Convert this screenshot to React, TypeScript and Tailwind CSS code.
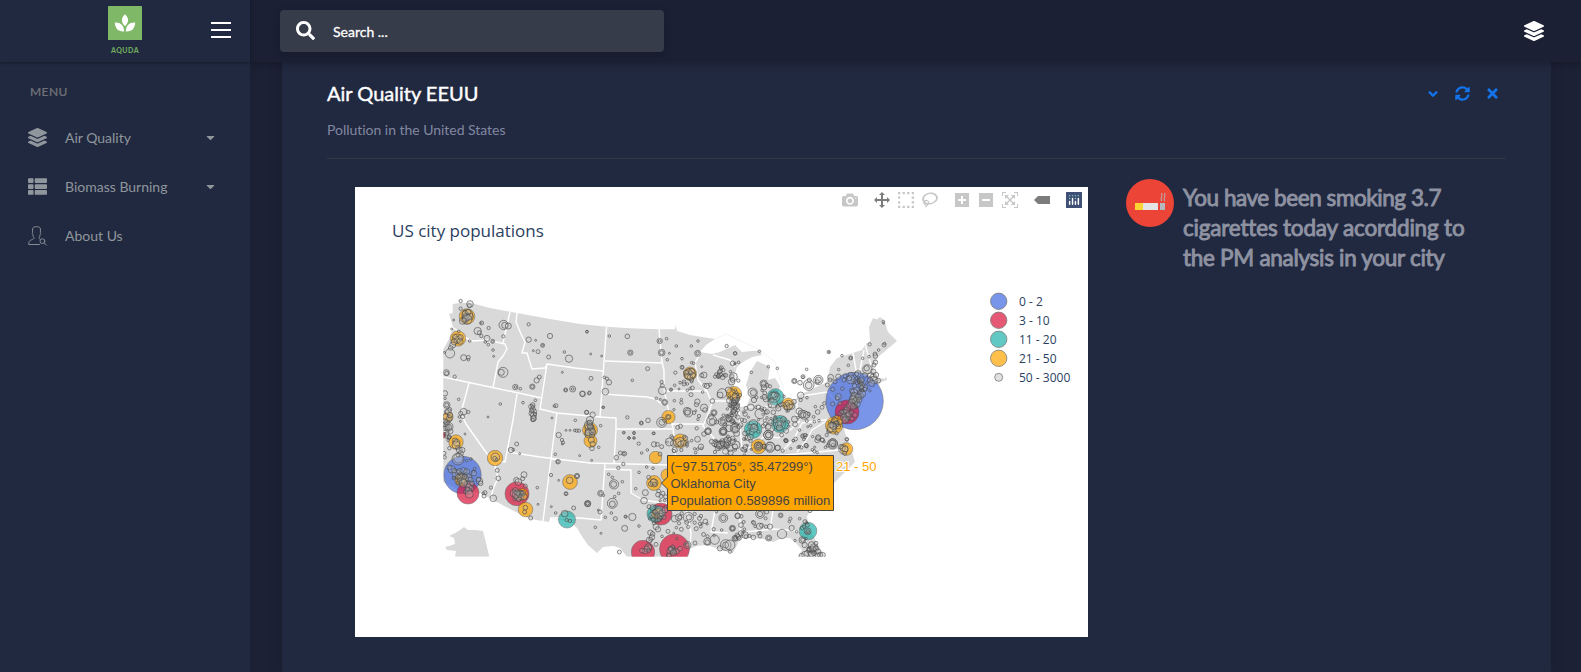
import React from "react";
import { FaChevronDown, FaLayerGroup, FaSearch, FaSyncAlt, FaThList, FaTimes, FaCaretDown } from "react-icons/fa";

type Dot = [number, number, number];

// City markers are stored per map tile, at three units to the pixel.
const tiles: { x: number; y: number; dots: Dot[] }[] = [
  {
    x: 430,
    y: 290,
    dots: [
      [92, 33, 5], [92, 56, 5], [120, 42, 10], [118, 47, 6], [71, 90, 3], [112, 75, 16], [108, 82, 12], [98, 93, 10], [120, 80, 10], [105, 70, 8], [115, 66, 8], [112, 88, 14], [102, 90, 7],
      [155, 99, 6], [153, 99, 3], [143, 123, 11], [148, 128, 6], [154, 138, 5], [176, 114, 5], [221, 105, 14], [224, 106, 9], [235, 108, 9], [220, 139, 5], [171, 145, 9], [166, 156, 4], [175, 164, 4], [188, 154, 6], [188, 154, 3],
      [86, 124, 4], [65, 117, 3], [82, 146, 14], [82, 148, 9], [72, 156, 9], [90, 154, 9], [68, 165, 9], [75, 140, 7], [92, 142, 8], [62, 174, 7], [60, 190, 14], [119, 153, 4], [101, 203, 9], [115, 202, 6], [115, 209, 4], [189, 180, 4], [191, 199, 3],
      [43, 187, 3], [49, 248, 9], [50, 250, 6], [74, 260, 5], [219, 247, 15], [214, 247, 9], [256, 291, 8], [257, 291, 4], [271, 296, 4], [307, 290, 8], [307, 290, 5], [320, 271, 8], [328, 261, 6],
      [296, 103, 5], [296, 149, 8], [317, 151, 3], [338, 166, 6], [338, 166, 3], [360, 138, 8], [310, 182, 3], [324, 185, 6], [356, 201, 6], [403, 186, 4], [417, 206, 11], [471, 125, 4], [397, 247, 3], [407, 300, 6], [407, 300, 4], [428, 297, 9], [428, 297, 4], [458, 312, 8], [477, 310, 5], [378, 347, 6], [373, 348, 4], [436, 391, 4], [366, 384, 3], [470, 367, 6],
      [86, 328, 4], [211, 342, 4], [174, 381, 3], [279, 338, 4], [316, 331, 4], [101, 365, 10], [115, 366, 5], [92, 370, 6], [88, 381, 4], [98, 380, 6], [45, 310, 8], [45, 325, 4], [50, 345, 10], [50, 345, 6], [55, 365, 9], [47, 380, 9], [58, 385, 9], [55, 410, 14], [45, 402, 8], [60, 375, 8],
      [308, 345, 7], [303, 350, 7], [308, 358, 8], [312, 365, 8], [305, 370, 8], [310, 376, 9], [311, 384, 8], [309, 350, 5], [305, 362, 6], [315, 372, 5],
    ],
  },
  {
    x: 430,
    y: 420,
    dots: [
      [91, 4, 3], [105, 42, 3], [50, 8, 8], [45, 25, 7], [55, 22, 10], [62, 34, 7], [50, 42, 6], [45, 3, 7], [75, 62, 8], [80, 68, 10], [78, 75, 12], [83, 83, 6], [88, 90, 9], [97, 90, 8], [92, 100, 8], [42, 100, 6], [44, 112, 5],
      [85, 115, 14], [84, 117, 18], [84, 105, 6], [123, 117, 4], [110, 122, 4], [196, 112, 13], [194, 115, 6], [200, 118, 4], [202, 151, 6], [205, 175, 7], [183, 203, 5], [190, 235, 10], [165, 218, 6], [162, 228, 6], [160, 220, 4],
      [148, 183, 10], [152, 190, 7], [145, 178, 7], [134, 146, 4], [65, 148, 11], [58, 142, 7], [78, 160, 12], [92, 165, 9], [100, 152, 9], [110, 155, 9], [95, 176, 13], [105, 182, 12], [115, 172, 11], [122, 180, 8], [112, 194, 10], [104, 170, 7], [120, 194, 11], [88, 154, 8], [132, 160, 8], [100, 190, 12], [116, 202, 10], [124, 205, 8], [115, 213, 10], [108, 215, 7], [118, 222, 12], [112, 208, 7], [126, 190, 7], [84, 170, 7], [72, 152, 7],
      [243, 90, 8], [250, 89, 4], [260, 72, 6], [269, 101, 3], [282, 164, 9], [278, 176, 6], [259, 180, 8], [265, 186, 10], [286, 198, 6], [256, 212, 9], [250, 220, 10], [258, 225, 11], [264, 230, 12], [270, 222, 10], [273, 232, 8], [262, 218, 8], [279, 220, 8], [266, 238, 7], [282, 230, 9], [286, 263, 7], [284, 276, 6], [302, 294, 6],
      [322, 203, 4], [324, 253, 3], [384, 125, 7], [383, 125, 4], [386, 45, 8], [396, 60, 5], [399, 68, 5], [397, 72, 3], [408, 31, 3], [420, 31, 3], [434, 31, 4], [440, 32, 5], [447, 32, 5], [449, 107, 3], [376, 103, 4], [363, 165, 5], [386, 181, 3], [419, 181, 10], [441, 168, 8], [441, 168, 5], [408, 221, 6], [408, 221, 4], [431, 264, 6], [364, 260, 3], [377, 279, 4], [404, 281, 10], [410, 300, 5], [420, 303, 5], [473, 251, 9], [472, 250, 6], [310, -3, 8], [308, 0, 5],
    ],
  },
  {
    x: 580,
    y: 300,
    dots: [
      [21, 95, 4], [32, 162, 3], [88, 108, 4], [142, 109, 7], [151, 158, 8], [151, 158, 4], [65, 168, 3], [239, 123, 8], [239, 123, 4], [260, 116, 4], [289, 138, 4], [334, 138, 4], [354, 123, 4], [245, 158, 10], [245, 158, 6], [268, 160, 3], [353, 160, 9], [353, 160, 5], [262, 179, 4], [306, 176, 4], [203, 206, 6], [157, 241, 4], [33, 235, 6], [73, 232, 4], [81, 236, 5], [87, 247, 8], [76, 275, 10], [7, 281, 8], [29, 278, 5], [70, 322, 4], [69, 322, 3], [38, 344, 8], [20, 337, 6],
      [286, 218, 5], [306, 202, 6], [307, 202, 4], [335, 188, 4], [341, 190, 4], [365, 200, 3], [372, 225, 9], [365, 226, 6], [330, 222, 17], [326, 216, 9], [335, 214, 9], [323, 228, 9], [330, 232, 8], [338, 226, 8], [332, 218, 6], [318, 218, 7], [335, 240, 6], [300, 248, 4], [312, 246, 6], [312, 252, 6], [322, 252, 4], [337, 264, 6], [284, 256, 4], [273, 269, 5], [273, 269, 3], [297, 267, 3], [331, 266, 4], [374, 256, 6], [381, 258, 8], [390, 254, 5], [245, 246, 5], [247, 257, 6], [247, 272, 12], [229, 295, 4], [254, 307, 9], [254, 307, 6], [241, 298, 3], [283, 302, 4], [333, 284, 6], [368, 276, 4],
      [142, 352, 5], [184, 369, 6], [184, 369, 4], [204, 361, 7], [265, 351, 8], [265, 351, 5], [245, 367, 15], [246, 367, 9], [253, 362, 5], [304, 308, 5], [321, 333, 11], [325, 338, 13], [323, 338, 8], [347, 332, 3], [352, 305, 8], [372, 323, 11], [375, 330, 7], [357, 348, 5], [354, 358, 4], [293, 382, 6], [397, 303, 7], [402, 338, 9], [402, 338, 6], [393, 350, 8], [395, 362, 15], [397, 365, 9], [410, 366, 6], [428, 365, 13], [428, 365, 8], [446, 356, 9], [452, 356, 6], [384, 393, 10], [384, 393, 7], [350, 385, 5], [429, 395, 12], [429, 395, 8], [447, 385, 10], [463, 380, 8], [470, 400, 9],
      [426, 280, 14], [420, 285, 9], [445, 270, 9], [455, 245, 10], [460, 230, 12], [458, 240, 7], [415, 228, 6], [418, 216, 6], [430, 210, 5], [437, 226, 6], [405, 230, 5], [440, 138, 5], [466, 190, 3], [465, 160, 5], [475, 242, 5], [62, 377, 4], [30, 360, 11], [25, 375, 12], [29, 385, 14], [28, 395, 12], [35, 392, 10], [26, 402, 12], [31, 380, 8], [36, 405, 8], [30, 368, 8], [132, 398, 3], [162, 398, 4], [147, 414, 4], [162, 414, 3], [220, 400, 4], [277, 414, 5], [313, 410, 5],
    ],
  },
  {
    x: 580,
    y: 430,
    dots: [
      [25, 8, 10], [38, 6, 9], [34, 30, 9], [38, 42, 8], [36, 55, 7], [56, 52, 4], [35, 91, 3], [131, 8, 4], [162, 10, 4], [222, 10, 4], [147, 24, 4], [162, 24, 4], [176, 41, 5], [121, 69, 6], [133, 71, 7], [132, 71, 4], [109, 83, 7], [185, 69, 4], [240, 72, 6], [222, 43, 8], [232, 43, 6], [245, 50, 6], [268, 36, 12], [280, 40, 9], [292, 38, 12], [300, 35, 13], [302, 42, 9], [310, 38, 8], [284, 60, 8], [282, 63, 5], [304, 60, 5], [321, 48, 4], [335, 32, 4], [363, 50, 8], [347, 68, 4], [372, 12, 7], [384, 5, 9], [202, 60, 4], [200, 111, 4], [130, 102, 5], [115, 114, 5],
      [222, 159, 12], [220, 155, 9], [224, 162, 6], [212, 162, 7], [219, 115, 4], [206, 142, 6], [177, 127, 4], [86, 133, 4], [102, 163, 14], [101, 163, 9], [127, 155, 4], [97, 142, 4], [62, 190, 9], [62, 190, 5], [116, 190, 4], [97, 220, 15], [97, 222, 9], [104, 200, 4], [23, 221, 9], [23, 221, 5], [60, 246, 6], [55, 240, 3], [94, 249, 4], [76, 262, 4], [106, 266, 6], [137, 260, 5], [137, 260, 3], [157, 261, 11], [134, 295, 9], [167, 176, 4], [196, 188, 9], [192, 212, 10], [234, 194, 7], [243, 199, 6], [254, 211, 4], [207, 230, 6], [46, 292, 4], [63, 310, 3], [118, 366, 6], [70, 196, 4],
      [234, 248, 13], [240, 243, 15], [230, 257, 9], [241, 259, 9], [216, 256, 10], [247, 250, 10], [225, 246, 7], [255, 240, 9], [237, 270, 6], [220, 268, 6], [252, 262, 6], [284, 266, 10], [296, 262, 10], [300, 262, 6], [325, 262, 15], [327, 262, 8], [305, 250, 5], [344, 252, 5], [363, 258, 5], [376, 274, 7], [360, 281, 5], [222, 280, 5], [228, 290, 9], [234, 298, 8], [211, 308, 8], [218, 312, 7], [208, 330, 9], [212, 328, 6], [216, 322, 8], [228, 343, 6], [264, 304, 6], [246, 319, 4], [281, 309, 3], [289, 293, 4], [304, 298, 6], [177, 288, 4], [320, 277, 6], [297, 280, 5],
      [205, 352, 11], [208, 352, 7], [200, 356, 8], [195, 364, 8], [186, 362, 7], [206, 362, 6], [277, 358, 10], [281, 362, 8], [270, 362, 9], [290, 364, 8], [280, 368, 9], [279, 350, 5], [272, 356, 7], [322, 345, 11], [322, 345, 6], [300, 356, 7], [345, 339, 6], [382, 335, 11], [382, 337, 7], [404, 329, 14], [437, 345, 16], [437, 345, 9], [420, 355, 8], [430, 264, 13], [430, 264, 8], [473, 258, 8], [457, 295, 9], [457, 295, 5], [425, 300, 4], [465, 325, 9], [475, 320, 7], [450, 365, 5], [409, 245, 4], [344, 278, 5],
      [405, 40, 10], [412, 45, 9], [420, 45, 11], [428, 40, 7], [413, 55, 7], [440, 45, 8], [450, 55, 10], [430, 3, 11], [430, 5, 8], [452, 68, 8], [395, 35, 7], [405, 66, 5], [437, 64, 9],
    ],
  },
  {
    x: 730,
    y: 300,
    dots: [
      [16, 160, 5], [88, 154, 4], [14, 192, 3], [26, 187, 4], [64, 217, 4], [115, 200, 4], [142, 205, 4], [296, 156, 5], [297, 156, 3], [362, 174, 6], [362, 174, 4], [336, 167, 4], [355, 196, 4], [326, 209, 4], [398, 175, 4], [419, 133, 5], [462, 135, 6], [464, 131, 4], [460, 65, 4], [461, 70, 3], [446, 150, 4], [435, 162, 6], [436, 168, 7], [436, 187, 7], [432, 195, 6], [417, 170, 4],
      [230, 208, 4], [219, 230, 6], [219, 232, 4], [193, 243, 8], [193, 243, 5], [210, 248, 7], [236, 255, 16], [236, 256, 10], [238, 240, 6], [265, 240, 14], [265, 240, 9], [262, 245, 6], [101, 251, 11], [101, 251, 7], [111, 256, 6], [120, 259, 5], [68, 278, 14], [70, 278, 9], [72, 300, 8], [62, 322, 10], [85, 322, 7], [48, 325, 6], [90, 341, 15], [133, 290, 17], [132, 288, 12], [132, 285, 8], [125, 300, 7], [140, 285, 6], [128, 310, 14], [145, 325, 8], [175, 315, 14], [178, 320, 9], [172, 312, 6], [186, 320, 8], [168, 324, 6], [212, 286, 10], [212, 300, 5], [231, 293, 4], [192, 305, 7], [256, 320, 4], [276, 322, 6], [283, 310, 5], [263, 336, 7], [216, 342, 12], [222, 345, 13], [220, 345, 8], [230, 345, 10], [236, 342, 5], [253, 365, 4], [267, 362, 4], [242, 377, 4],
      [148, 372, 18], [148, 372, 12], [148, 372, 7], [160, 358, 8], [122, 368, 9], [120, 383, 14], [115, 380, 8], [136, 362, 6], [168, 392, 8], [115, 405, 14], [115, 405, 8], [70, 372, 13], [72, 378, 8], [60, 380, 7], [78, 383, 6], [61, 411, 9], [55, 396, 6], [85, 395, 5], [100, 378, 6], [15, 385, 14], [15, 388, 9], [28, 380, 6], [8, 362, 6], [44, 362, 6], [45, 400, 7], [85, 437, 12], [85, 437, 7], [102, 438, 6], [120, 440, 14], [143, 443, 8], [18, 435, 12], [15, 440, 8], [8, 425, 8],
      [308, 430, 14], [308, 430, 9], [310, 435, 6], [265, 412, 8], [277, 420, 6], [351, 418, 5], [340, 448, 14], [338, 445, 8], [225, 405, 5], [168, 422, 6], [208, 440, 3], [190, 422, 4], [228, 436, 6], [230, 440, 4], [320, 400, 5], [295, 395, 5], [300, 390, 8], [290, 405, 5],
      [412, 208, 14], [410, 205, 8], [430, 215, 8], [422, 228, 10], [430, 232, 10], [432, 240, 12], [420, 240, 8], [438, 225, 8], [425, 250, 9], [445, 242, 7], [405, 225, 7], [395, 240, 8], [380, 222, 6], [362, 225, 8], [362, 238, 13], [358, 235, 7], [345, 228, 6], [325, 230, 8], [302, 232, 9], [300, 240, 6], [315, 245, 6], [292, 255, 6], [308, 268, 6], [342, 240, 6], [337, 266, 5], [325, 290, 9], [322, 295, 6], [330, 310, 6], [308, 312, 6], [374, 258, 7], [380, 270, 9], [372, 278, 11], [374, 290, 12], [370, 298, 12], [365, 308, 11], [378, 302, 10], [385, 290, 9], [390, 278, 7], [395, 262, 6], [382, 312, 9], [358, 318, 9], [370, 320, 9], [398, 282, 9], [388, 300, 8], [405, 268, 6], [350, 330, 9], [345, 340, 12], [352, 350, 11], [340, 352, 9], [356, 342, 8], [365, 338, 6], [375, 345, 7], [335, 335, 6], [345, 360, 10], [366, 356, 6], [330, 365, 8], [318, 372, 9], [310, 378, 10], [305, 382, 14], [315, 360, 7], [325, 380, 7], [304, 375, 8], [320, 350, 5],
    ],
  },
  {
    x: 730,
    y: 430,
    dots: [
      [65, 6, 8], [72, -5, 12], [115, 15, 14], [115, 15, 9], [148, -6, 9], [85, 50, 13], [85, 50, 8], [84, 50, 4], [103, 50, 7], [120, 52, 15], [118, 52, 9], [143, 54, 8], [168, 32, 6], [168, 33, 4], [158, 62, 5], [190, 32, 4], [208, 50, 4], [229, 47, 6], [264, 24, 7], [277, 30, 6], [308, 42, 15], [308, 40, 10], [350, 28, 5], [345, 57, 9], [333, 50, 7], [344, 70, 6],
      [23, 257, 8], [90, 252, 13], [90, 252, 8], [110, 246, 6], [152, 256, 7], [152, 256, 4], [181, 266, 5], [178, 275, 4], [209, 266, 4], [225, 275, 6], [240, 242, 6], [222, 290, 5], [200, 305, 4], [185, 294, 8], [156, 312, 14], [120, 290, 8], [108, 290, 5], [116, 324, 9], [116, 324, 5], [90, 318, 6], [86, 310, 5], [70, 322, 7], [45, 315, 10], [48, 320, 6], [16, 325, 7], [16, 324, 4], [28, 325, 6], [8, 295, 7], [33, 310, 8], [58, 318, 5], [0, 345, 15],
      [232, 285, 6], [233, 304, 10], [233, 304, 5], [217, 330, 10], [218, 330, 6], [224, 345, 8], [245, 345, 10], [252, 352, 11], [248, 358, 10], [258, 356, 8], [258, 340, 6], [264, 365, 8], [232, 370, 9], [225, 374, 10], [215, 378, 8], [244, 372, 9], [270, 375, 8], [278, 375, 8], [252, 370, 7], [262, 376, 7], [237, 358, 6],
    ],
  },
];

// Dense metropolitan areas: centre, spread and number of small cities.
const clusters: [number, number, number, number, number][] = [
  [735, 402, 6, 13, 50], [722, 372, 10, 8, 14], [730, 420, 14, 10, 24], [722, 443, 9, 6, 26],
  [745, 445, 20, 9, 18], [770, 420, 20, 14, 22], [772, 396, 14, 10, 10], [800, 425, 18, 16, 16],
  [812, 444, 20, 8, 16], [861, 382, 10, 10, 26], [854, 400, 6, 10, 22], [846, 415, 6, 7, 16], [835, 425, 6, 5, 14],
  [690, 440, 22, 14, 10], [665, 497, 12, 14, 8], [656, 514, 6, 6, 14], [700, 530, 22, 14, 12],
  [750, 525, 26, 10, 14], [805, 532, 12, 12, 7], [811, 549, 7, 6, 12], [464, 478, 9, 8, 22],
  [519, 494, 5, 5, 10], [467, 316, 5, 5, 10], [589, 430, 4, 8, 8], [447, 430, 3, 20, 16], [672, 552, 6, 4, 6], [690, 400, 18, 20, 6],
];

function scatter(): Dot[] {
  let seed = 20147;
  const next = () => {
    seed = (seed * 16807) % 2147483647;
    return seed / 2147483647;
  };
  const dots: Dot[] = [];
  for (const [cx, cy, sx, sy, n] of clusters) {
    for (let i = 0; i < n; i++) {
      const x = cx + (next() + next() - 1) * sx * 1.25;
      const y = cy + (next() + next() - 1) * sy * 1.25;
      const r = 1.1 + next() * next() * 2.2;
      dots.push([x, y, r]);
    }
  }
  return dots;
}
const smallCities = scatter();

const large: { fill: string; dots: Dot[] }[] = [
  { fill: "#4169e1", dots: [[854.6, 401, 28.7], [462.5, 475, 18.7]] },
  { fill: "#dc143c", dots: [[847, 412, 12], [468, 493, 11], [517, 493.7, 12], [661, 514, 11], [643, 552, 11.7], [674.5, 549, 15], [443, 435, 3]] },
  { fill: "#20b2aa", dots: [[775.5, 397, 8.3], [753, 429.5, 8.7], [780, 424, 8.6], [567, 519.5, 8.5], [655.5, 514, 8.5], [808, 531, 8.8]] },
  {
    fill: "#ffa500",
    dots: [[467, 316.5, 7.8], [458, 338.5, 7.6], [448, 417, 5], [456, 442, 7.2], [495, 458, 7.7], [461, 480, 6], [522, 494.5, 6], [525.5, 509.5, 7.3], [570, 482, 7.4], [590, 430, 7.5], [590.5, 441, 6.5], [690, 373.7, 6.7], [668.5, 417, 6.6], [680, 441, 7], [655.5, 457.5, 6.2], [654, 483, 7.4], [667, 475, 6], [734, 394, 7.6], [788, 404, 6], [758.5, 446.5, 7.3], [834, 425.5, 8.6], [837, 421, 5.5], [846.5, 449, 6.3], [657, 514, 5]],
  },
];

const land = [
  "M452.7 304L460 303L470 302.7L490 308L510 311.7L550 319L580 324L606.5 326.7L635 328.5L660 329.3L675 329.3L675.7 325L677 331L690 335L702 337L715 339L706 345L700 352L712 354L720 352L735 345L742 352L752 351L760 350.7L762 355L752 357L743 362L737 367L733 380L736 398L740 407L747 406L750 397L746 385L750 372L757 361L770 367L768 380L775 378L780 386L776 398L790 404L800 395L827 382L830 367L837 358L862 350L865 345L870 341L869 327L873 318L877 319.5L880 317L884 320L888 332L897 341L884 352L878 357L873 367L876 377L883 380L876 387L862 392L866 395L852 402L848 412L843 423L845 433L850 445L855 462L844 473L833 484L820 495L810 510L807 517L810 530L817 543L825 556.7L798 556.7L802 550L795 542L790 538L782 538L773 542L763 539L743 537L739 541L733 553L721 550L707 545L696 546L690 549L687 556.7L627 556.7L620 548L613 546L603 547L597 553L588 545L583 538L577 528L571 522L550 518L549 522L543 521L530 519L510 509L493 500L480 493L462 491L443 482V350L449 339L453 327L449 314L452.700 313Z",
  "M445 547L449 546L455 544L454 538L449 536L455 533L460 530L464 527L468 530L476 530L483 531L486 543L489.3 556.7L455 556.7L456 551L447 550Z",
  "M880 378l5 1 1-3 1 4-6 2z",
];

const borders =
  "M510 312L503 343M452 327L460 332L466 338L473 341L487 340L505 344L507 349L503 356L498 362L493 388M443 377L542 398M469 383L461 413L466 424L495 465L498 478L493 489L491 497M517 394L513 420L505 462L499 461L495 465M508 452L540 457L590 463L668 465M557 413L556 420L543 521M517 313L516 322L521 334L525 342L522 353L527 353L532 369L545 368L547 364L575 368L603 371M547 364L540 409L557 413L600 417L616 418V429H672M606.5 327L600 417M605 361L663 363M602 394L647 397L655 399L663 405M616 429L614 464M659 329L662 362L664 370L664 390L670 417L673 428L675 450L676 465M664 391H707M702 350L695 363L698 380L707 391L712 403L707 417L703 426L712 436L722 448L729 465M672 424H703M713 355L730 360L735 367M712 401H737M605 463L601 520L580 518L550 518M605 469L631 470V493L643 500L663 503L684 507L687 512L691 533L690 546M715 510L711 532L728 533M740 510V535M773 510L770 530M745 532L773 529L800 531M739 410L742 450L755 446L765 435L778 438L790 430L800 421M765 407V430M747 407L765 407L777 404M797 400V420M802 396L827 392L840 405L838 418L802 423L794 439L783 450M828 420L812 430L805 442L797 452M738 458L785 455L850 449M853 353L856 370L855 390M864 350L860 370M865 344L871 365M854 375L873 375M856 383L870 383";

const marker = "#444444";

function UsMap() {
  return (
    <svg className="block h-[450px] w-[733px]" viewBox="355 187 733 450" role="img" aria-label="US city populations">
      <defs>
        <clipPath id="geo">
          <rect x="443.3" y="290" width="470" height="266.7" />
        </clipPath>
      </defs>
      <text x="392" y="237" fontSize="17" fill="#2a3f5f">US city populations</text>
      <g clipPath="url(#geo)">
        {land.map((d) => (
          <path key={d} d={d} fill="#d9d9d9" />
        ))}
        <path d={borders} fill="none" stroke="#fff" strokeWidth="1.4" strokeLinejoin="round" />
        <path d="M715 339L726 334L760 350L775 362L782 385" fill="none" stroke="#eee" strokeWidth=".7" />
        {large.map((group) => (
          <g key={group.fill} fill={group.fill} stroke={marker} strokeWidth=".6">
            {group.dots.map(([x, y, r], i) => (
              <circle key={i} cx={x} cy={y} r={r} opacity=".7" />
            ))}
          </g>
        ))}
        <g fill="#c8c8c8" fillOpacity=".25" stroke={marker} strokeOpacity=".62" strokeWidth=".95">
          {smallCities.map(([x, y, r], i) => (
            <circle key={i} cx={x} cy={y} r={r} />
          ))}
          {tiles.map((tile) =>
            tile.dots.map(([x, y, r], i) => (
              <circle key={`${tile.x}-${tile.y}-${i}`} cx={tile.x + x / 3} cy={tile.y + y / 3} r={r / 3} />
            )),
          )}
        </g>
      </g>
      <g stroke={marker} strokeWidth=".8" opacity=".7">
        <circle cx="998.7" cy="301.3" r="8.2" fill="#4169e1" />
        <circle cx="998.7" cy="320.3" r="8.2" fill="#dc143c" />
        <circle cx="998.7" cy="339.3" r="8.2" fill="#20b2aa" />
        <circle cx="998.7" cy="358.3" r="8.2" fill="#ffa500" />
        <circle cx="998.7" cy="377.3" r="4" fill="#d3d3d3" />
      </g>
      <g fontSize="12" fill="#2a3f5f">
        <text x="1019" y="305.7">0 - 2</text>
        <text x="1019" y="324.7">3 - 10</text>
        <text x="1019" y="343.7">11 - 20</text>
        <text x="1019" y="362.7">21 - 50</text>
        <text x="1019" y="381.7">50 - 3000</text>
      </g>
      <path d="M661.5 483l6-6v-21.5h166v55h-166V489z" fill="#ffa500" stroke={marker} />
      <g className="font-['Liberation_Sans',sans-serif]" fontSize="13" fill={marker}>
        <text x="670.5" y="470.5">(−97.51705°, 35.47299°)</text>
        <text x="670.5" y="487.5">Oklahoma City</text>
        <text x="670.5" y="504.5">Population 0.589896 million</text>
        <text x="836" y="470.5" fill="#ffa500" stroke="#fff" strokeWidth="2" paintOrder="stroke">21 - 50</text>
      </g>
    </svg>
  );
}

const bar = {
  camera:
    "m500 450c-83 0-150-67-150-150 0-83 67-150 150-150 83 0 150 67 150 150 0 83-67 150-150 150z m400 150h-120c-16 0-34 13-39 29l-31 93c-6 15-23 28-40 28h-340c-16 0-34-13-39-28l-31-94c-6-15-23-28-40-28h-120c-55 0-100-45-100-100v-450c0-55 45-100 100-100h800c55 0 100 45 100 100v450c0 55-45 100-100 100z m-400-550c-138 0-250 112-250 250 0 138 112 250 250 250 138 0 250-112 250-250 0-138-112-250-250-250z m365 380c-19 0-35 16-35 35 0 19 16 35 35 35 19 0 35-16 35-35 0-19-16-35-35-35z",
  pan: "m1000 350l-187 188 0-125-250 0 0 250 125 0-188 187-187-187 125 0 0-250-250 0 0 125-188-188 186-187 0 125 252 0 0-250-125 0 187-188 188 188-125 0 0 250 250 0 0-126 187 188z",
  select:
    "m0 850l0-143 143 0 0 143-143 0z m286 0l0-143 143 0 0 143-143 0z m285 0l0-143 143 0 0 143-143 0z m286 0l0-143 143 0 0 143-143 0z m-857-286l0-143 143 0 0 143-143 0z m857 0l0-143 143 0 0 143-143 0z m-857-285l0-143 143 0 0 143-143 0z m857 0l0-143 143 0 0 143-143 0z m-857-286l0-143 143 0 0 143-143 0z m286 0l0-143 143 0 0 143-143 0z m285 0l0-143 143 0 0 143-143 0z m286 0l0-143 143 0 0 143-143 0z",
  lasso:
    "m1018 538c-36 207-290 336-568 286-277-48-473-256-436-463 10-57 36-108 76-151-13-66 11-137 68-183 34-28 75-41 114-42l-55-70 0 0c-2-1-3-2-4-3-10-14-8-34 5-45 14-11 34-8 45 4 1 1 2 3 2 5l0 0 113 140c16 11 31 24 45 40 4 3 6 7 8 11 48-3 100 0 151 9 278 48 473 255 436 462z m-624-379c-80 14-149 48-197 96 42 42 109 47 156 9 33-26 47-66 41-105z m-187-74c-19 16-33 37-39 60 50-32 109-55 174-68-42-25-95-24-135 8z m360 75c-34-7-69-9-102-8 8 62-16 128-68 170-73 59-175 54-244-5-9 20-16 40-20 61-28 159 121 317 333 354s407-60 434-217c28-159-121-318-333-355z",
  plus: "m1 787l0-875 875 0 0 875-875 0z m687-500l-187 0 0-187-125 0 0 187-188 0 0 125 188 0 0 187 125 0 0-187 187 0 0-125z",
  minus: "m0 788l0-876 876 0 0 876-876 0z m688-500l-500 0 0 125 500 0 0-125z",
  reset:
    "m250 850l-187 0-63 0 0-62 0-188 63 0 0 188 187 0 0 62z m688 0l-188 0 0-62 188 0 0-188 62 0 0 188 0 62-62 0z m-875-938l0 188-63 0 0-188 0-62 63 0 187 0 0 62-187 0z m875 188l0-188-188 0 0-62 188 0 62 0 0 62 0 188-62 0z m-125 188l-1 0-93-94-156 156 156 156 92-93 2 0 0 250-250 0 0-2 93-92-156-156-156 156 94 92 0 2-250 0 0-250 0 0 93 93 157-156-157-156-93 94 0 0 0-250 250 0 0 0-94 93 156 157 156-157-93-93 0 0 250 0 0 250z",
  tag: "m375 725l0 0-375-375 375-374 0-1 1125 0 0 750-1125 0z",
};

function BarIcon({ d, width = 1000, active = false }: { d: string; width?: number; active?: boolean }) {
  return (
    <button className="px-1">
      <svg className="block size-4" viewBox={`0 0 ${width} 1000`}>
        <path d={d} transform="matrix(1 0 0 -1 0 850)" fill={active ? "#7c7c7c" : "#c7c7c7"} />
      </svg>
    </button>
  );
}

function ModeBar() {
  return (
    <div className="absolute right-[2px] top-[5px] flex h-4 gap-2">
      <div className="flex">
        <BarIcon d={bar.camera} />
      </div>
      <div className="flex">
        <BarIcon d={bar.pan} active />
        <BarIcon d={bar.select} />
        <BarIcon d={bar.lasso} width={1031} />
      </div>
      <div className="flex">
        <BarIcon d={bar.plus} width={875} />
        <BarIcon d={bar.minus} width={875} />
        <BarIcon d={bar.reset} />
      </div>
      <div className="flex">
        <BarIcon d={bar.tag} width={1500} active />
      </div>
      <div className="px-1">
        <svg className="block size-4" viewBox="0 0 132 132">
          <rect width="132" height="132" rx="3" fill="#3f4f75" />
          <g fill="#80cfbe">
            <circle cx="78" cy="54" r="6" />
            <circle cx="102" cy="30" r="6" />
            <circle cx="78" cy="30" r="6" />
            <circle cx="54" cy="30" r="6" />
            <circle cx="30" cy="30" r="6" />
            <circle cx="30" cy="54" r="6" />
          </g>
          <path d="M30 78v24M54 54v48M78 78v24M102 54v48" stroke="#fff" strokeWidth="12" strokeLinecap="round" />
        </svg>
      </div>
    </div>
  );
}

function Logo() {
  return (
    <div className="ml-[108px] flex w-[34px] flex-col items-center pt-[6px]">
      <svg className="block h-[34px] w-[34px]" viewBox="0 0 34 34">
        <rect width="34" height="34" rx=".6" fill="#7fb968" />
        <g fill="#fff">
          <path d="M17 8.2c4.200 4 4 8.200 0 12c-4-3.800-4.200-8 0-12z" />
          <path d="M6.800 16.600c5.700-.3 9.200 2.800 9.400 8.900c-5.700.4-9.200-2.800-9.400-8.900z" />
          <path d="M27.200 16.600c-5.700-.3-9.200 2.800-9.400 8.900c5.700.4 9.200-2.800 9.400-8.900z" />
        </g>
      </svg>
      <span className="mt-[6px] text-[7px] leading-[8px] font-black tracking-[0.5px] text-[#6ea85c]">AQUDA</span>
    </div>
  );
}

function UserSearchIcon() {
  return (
    <svg className="block size-5" viewBox="0 0 20 20" fill="none" stroke="currentColor" strokeWidth=".9" strokeLinecap="round" strokeLinejoin="round">
      <path d="M11.500 18.500H.7c.1-3 .8-3.800 2.600-4.600 2-.8 2.700-1 2.700-2.200-.8-.8-1-1.700-1.100-3-.7-.6-.7-1.500-.3-2V3C4.600 1.300 6 .7 8.500.7S12.400 1.300 12.400 3v3.700c.4.500.4 1.400-.3 2-.1 1.300-.4 2-1.100 3 0 .8.300 1.200 1 1.500" />
      <circle cx="14.400" cy="15.200" r="2.400" />
      <path d="M16.200 17l2.300 2.300" />
    </svg>
  );
}

function MenuItem({ icon, label, caret = false }: { icon: React.ReactNode; label: string; caret?: boolean }) {
  return (
    <a className="flex h-[49px] items-center pl-7 pr-[33px] text-[#8f969c]">
      <span className="flex w-[37px] items-center">{icon}</span>
      <span className="text-[14px]">{label}</span>
      {caret && <FaCaretDown className="ml-auto mb-[1px] size-[13px]" />}
    </a>
  );
}

export default function App() {
  return (
    <div className="flex h-[672px] w-full overflow-hidden bg-[#1c2135] font-[Lato,sans-serif]">
      <aside className="relative z-20 flex w-[250px] shrink-0 flex-col bg-[#212940] shadow-[1px_0_6px_rgba(0,0,0,0.06)]">
        <div className="flex h-[62px] shrink-0 items-start shadow-[0_1px_3px_rgba(0,0,0,0.35)]">
          <Logo />
          <div className="ml-[69px] mt-[22px] flex w-5 flex-col gap-[5px]">
            <span className="h-[2px] bg-white" />
            <span className="h-[2px] bg-white" />
            <span className="h-[2px] bg-white" />
          </div>
        </div>
        <div className="mt-[22px] pl-[30px] text-[12px] leading-4 font-medium tracking-[0.4px] text-[#6f7177] [-webkit-text-stroke:0.2px]">MENU</div>
        <nav className="mt-[13px] flex flex-col">
          <MenuItem icon={<FaLayerGroup className="size-[19px]" />} label="Air Quality" caret />
          <MenuItem icon={<FaThList className="size-[19px]" />} label="Biomass Burning" caret />
          <MenuItem icon={<UserSearchIcon />} label="About Us" />
        </nav>
      </aside>

      <div className="flex min-w-0 flex-1 flex-col">
        <header className="relative z-10 flex h-[62px] shrink-0 items-start justify-between bg-[#1b2035] pl-[30px] pr-[37px] shadow-[0_2px_8px_rgba(0,0,0,0.25)]">
          <div className="mt-[10px] flex h-[42px] w-[384px] items-center rounded bg-[#373c4b] pl-4 text-white shadow-[0_3px_8px_rgba(0,0,0,0.2)]">
            <FaSearch className="mb-[2px] size-[19px]" />
            <span className="ml-[18px] text-[14px] [-webkit-text-stroke:0.3px]">Search ...</span>
          </div>
          <FaLayerGroup className="mt-[21px] size-5 text-white" />
        </header>

        <main className="ml-8 mr-[30px] flex-1 bg-[#212941] px-[45px] shadow-[0_0_14px_rgba(0,0,0,0.12)]">
          <div className="flex items-start justify-between pt-[18px]">
            <h4 className="text-[20px] leading-[26px] text-white [-webkit-text-stroke:0.4px]">Air Quality EEUU</h4>
            <div className="mr-[6px] flex items-center gap-[15px] pt-[6px] text-[#1273eb]">
              <FaChevronDown className="mr-[2px] size-[10px] overflow-visible [stroke-width:50] [stroke:currentColor]" />
              <FaSyncAlt className="size-[15px]" />
              <FaTimes className="size-[15px]" />
            </div>
          </div>
          <p className="mt-[14px] text-[14px] leading-5 tracking-[-0.03px] text-[#8288a0]">Pollution in the United States</p>
          <div className="mt-[18px] h-px bg-[#313848]" />
          <div className="flex">
            <div className="relative ml-7 mt-7 h-[450px] w-[733px] shrink-0 bg-white font-['Open_Sans',sans-serif]">
              <UsMap />
              <ModeBar />
            </div>
            <div className="ml-[38px] mt-5 flex items-start">
              <svg className="size-12 shrink-0" viewBox="0 0 48 48">
                <circle cx="24" cy="24" r="24" fill="#ec4436" />
                <path d="M9 24h8v7H9z" fill="#fbd334" />
                <path d="M17 24h15v7H17z" fill="#e4e4e6" />
                <path d="M34 24h5v7h-5z" fill="#b3b9bf" />
                <path d="M35.500 22c-1.500-3 1.500-4.500.2-8M38.500 22c-1.500-3 1.500-4.500.2-8" fill="none" stroke="#b3b9bf" />
              </svg>
              <h4 className="ml-[9px] mt-[4px] w-[300px] text-[22.5px] leading-[30px] text-[#8e92a1] [-webkit-text-stroke:0.9px]">
                <span className="block tracking-[-0.44px]">You have been smoking 3.7</span>
                <span className="block tracking-[-0.18px]">cigarettes today acordding to</span>
                <span className="block tracking-[-0.29px]">the PM analysis in your city</span>
              </h4>
            </div>
          </div>
        </main>
      </div>
    </div>
  );
}
